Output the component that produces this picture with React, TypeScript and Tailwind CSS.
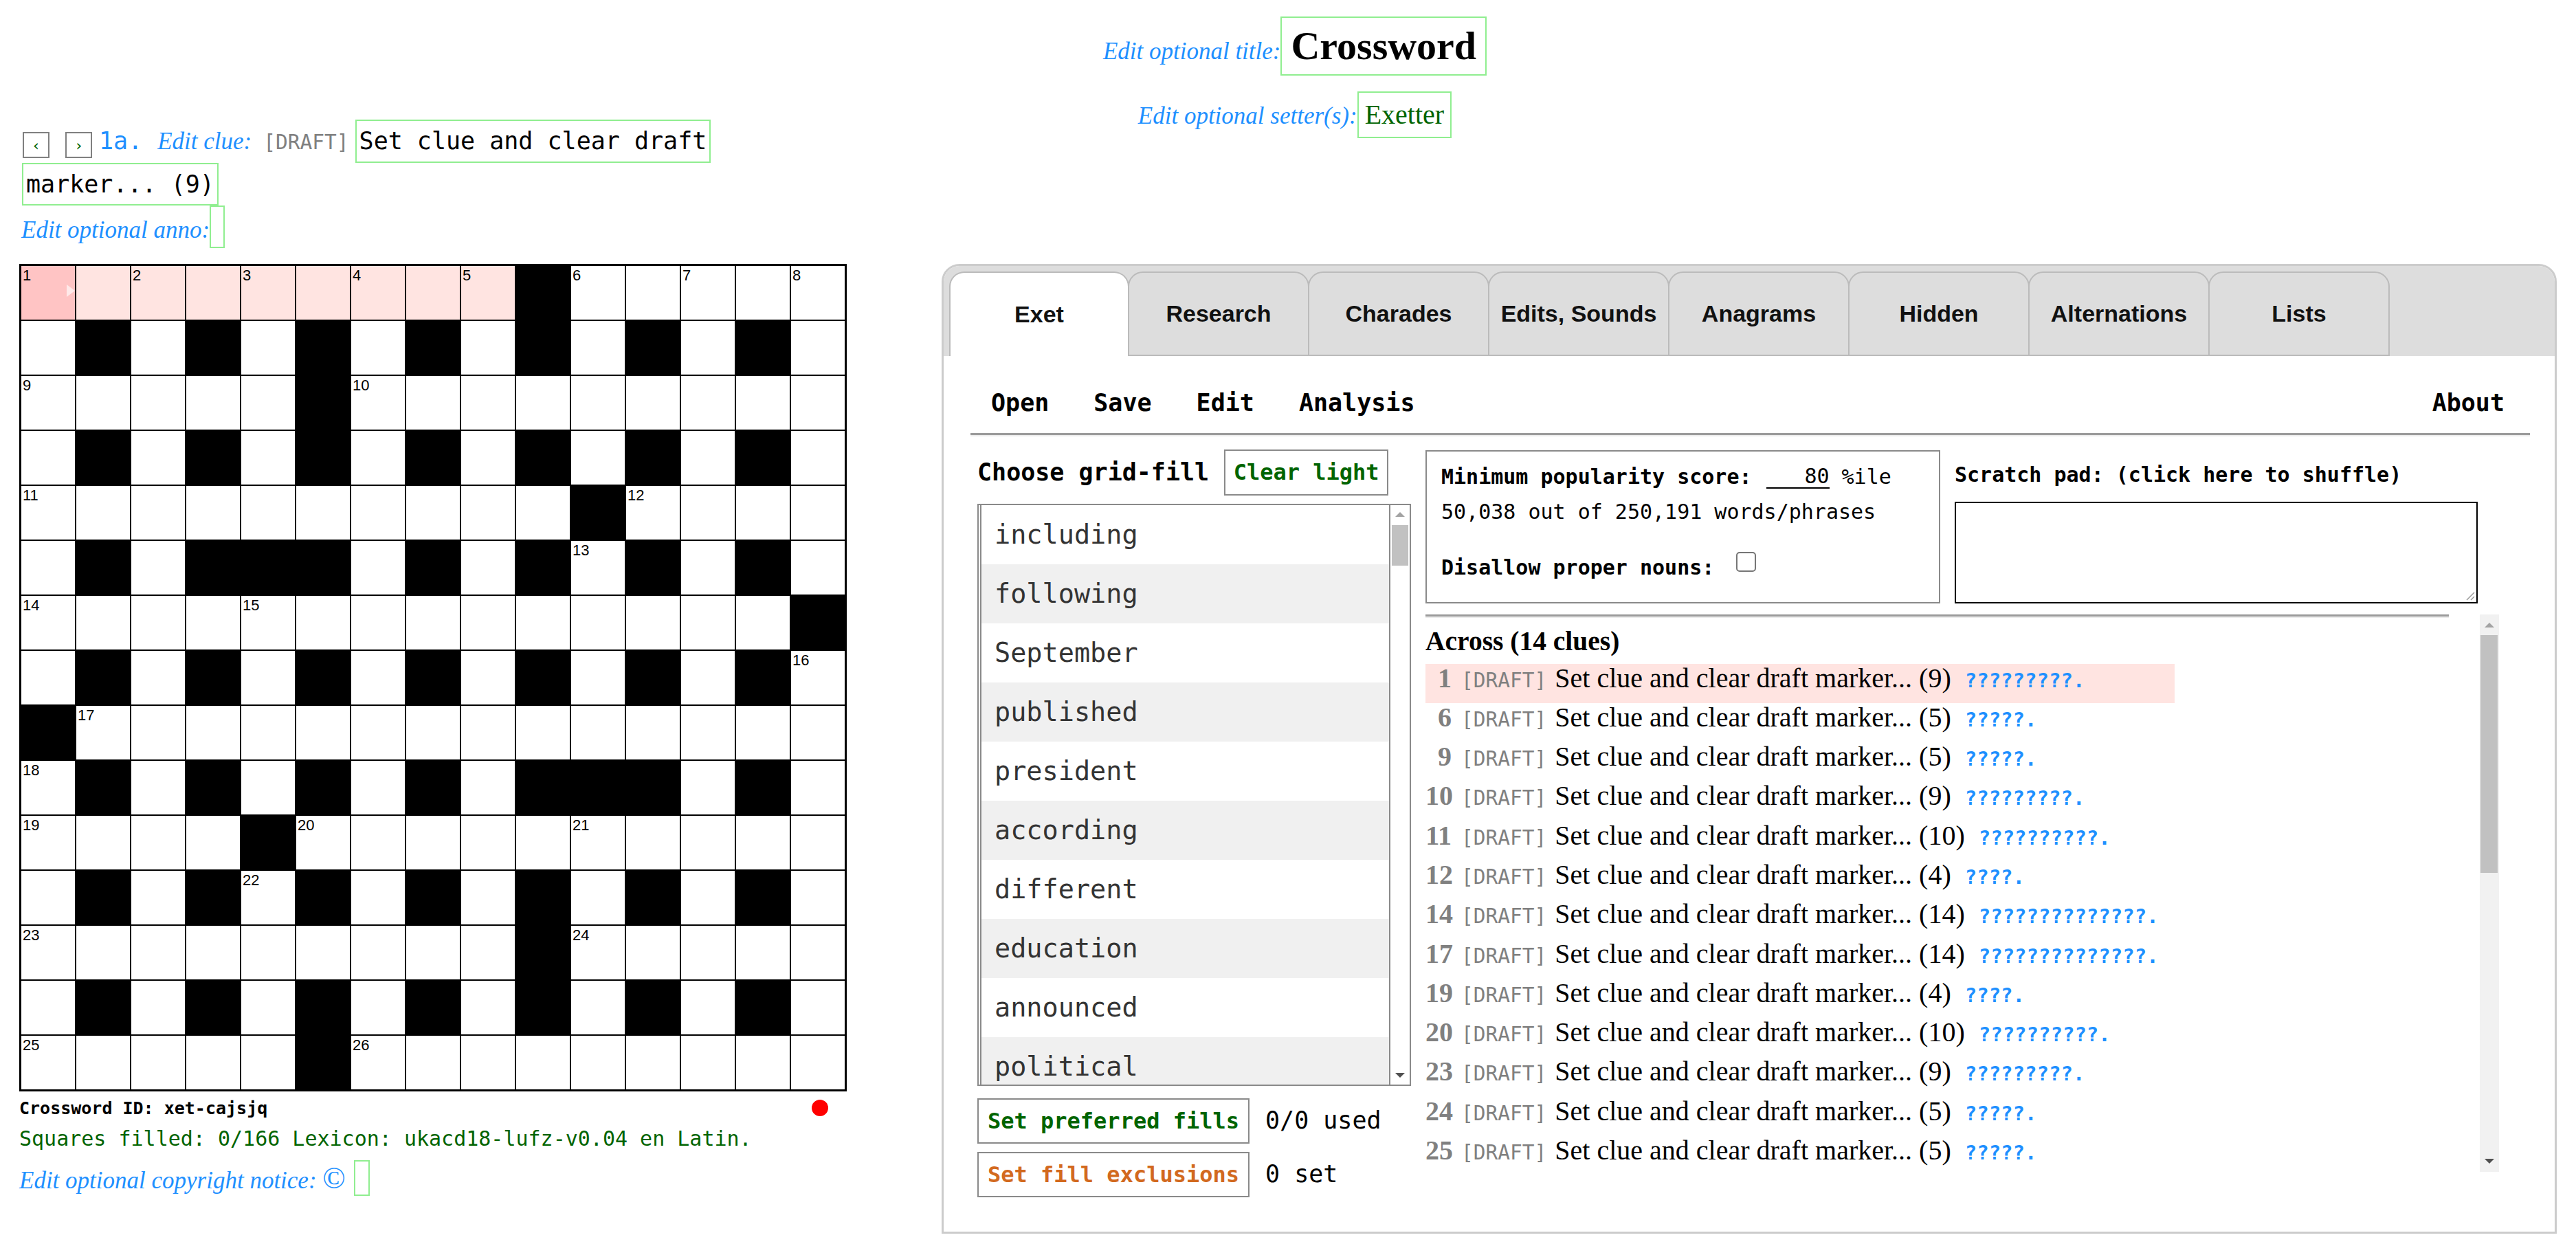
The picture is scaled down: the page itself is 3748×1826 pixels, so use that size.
import React from 'react';

const MONO = "font-['DejaVu_Sans_Mono',monospace]";
const SERIF = "font-['Liberation_Serif',serif]";
const SANS = "font-['Liberation_Sans',Arial,sans-serif]";

const GRID = [
  'WWWWWWWWWBWWWWW',
  'WBWBWBWBWBWBWBW',
  'WWWWWBWWWWWWWWW',
  'WBWBWBWBWBWBWBW',
  'WWWWWWWWWWBWWWW',
  'WBWBBBWBWBWBWBW',
  'WWWWWWWWWWWWWWB',
  'WBWBWBWBWBWBWBW',
  'BWWWWWWWWWWWWWW',
  'WBWBWBWBWBBBWBW',
  'WWWWBWWWWWWWWWW',
  'WBWBWBWBWBWBWBW',
  'WWWWWWWWWBWWWWW',
  'WBWBWBWBWBWBWBW',
  'WWWWWBWWWWWWWWW',
];

function computeNumbers(): number[][] {
  const n = GRID.length;
  const nums: number[][] = GRID.map((r) => r.split('').map(() => 0));
  let k = 1;
  const w = (r: number, c: number) => r >= 0 && c >= 0 && r < n && c < n && GRID[r][c] === 'W';
  for (let r = 0; r < n; r++) {
    for (let c = 0; c < n; c++) {
      if (!w(r, c)) continue;
      const across = !w(r, c - 1) && w(r, c + 1);
      const down = !w(r - 1, c) && w(r + 1, c);
      if (across || down) nums[r][c] = k++;
    }
  }
  return nums;
}

const NUMS = computeNumbers();

const ACROSS: [number, string][] = [
  [1, '9'], [6, '5'], [9, '5'], [10, '9'], [11, '10'], [12, '4'], [14, '14'],
  [17, '14'], [19, '4'], [20, '10'], [23, '9'], [24, '5'], [25, '5'],
];

const WORDS = [
  'including', 'following', 'September', 'published', 'president',
  'according', 'different', 'education', 'announced', 'political',
];

const TABS = ['Exet', 'Research', 'Charades', 'Edits, Sounds', 'Anagrams', 'Hidden', 'Alternations', 'Lists'];

function UpArrow({ color }: { color: string }) {
  return (
    <svg width="14" height="8" viewBox="0 0 14 8">
      <polygon points="0,8 7,1 14,8" fill={color} />
    </svg>
  );
}
function DownArrow({ color }: { color: string }) {
  return (
    <svg width="14" height="8" viewBox="0 0 14 8">
      <polygon points="0,0 14,0 7,7" fill={color} />
    </svg>
  );
}

function Grid() {
  return (
    <div className="bg-black p-[3px] grid grid-cols-[repeat(15,78px)] gap-[2px] w-fit">
      {GRID.map((row, r) =>
        row.split('').map((ch, c) => {
          const black = ch === 'B';
          let bg = 'bg-white';
          if (black) bg = 'bg-black';
          else if (r === 0 && c === 0) bg = 'bg-[#ffc4c4]';
          else if (r === 0 && c < 9) bg = 'bg-[#ffe4e1]';
          const num = NUMS[r][c];
          return (
            <div key={`${r}-${c}`} className={`relative w-[78px] h-[78px] ${bg}`}>
              {num > 0 && (
                <span className={`block pl-[2px] pt-[3px] text-[22px] leading-none text-black ${SANS}`}>{num}</span>
              )}
              {r === 0 && c === 0 && (
                <svg className="absolute right-0 top-[27px]" width="14" height="18" viewBox="0 0 14 18">
                  <polygon points="2,0 14,9 2,18" fill="#ffe9e9" />
                </svg>
              )}
            </div>
          );
        })
      )}
    </div>
  );
}

function LeftColumn() {
  return (
    <div className="w-[1370px] shrink-0 pl-[28px]">
      <div className="flex items-baseline h-[63px]">
        <div className={`self-start mt-[18px] ml-[5px] w-[39px] h-[38px] border-2 border-[#808080] flex items-center justify-center text-[22px] text-[#006400] ${MONO}`}>‹</div>
        <div className={`self-start mt-[18px] ml-[23px] w-[39px] h-[38px] border-2 border-[#808080] flex items-center justify-center text-[22px] text-[#006400] ${MONO}`}>›</div>
        <span className={`ml-[10px] text-[35px] text-[#1e90ff] ${MONO}`}>1a.</span>
        <span className={`ml-[22px] italic text-[35px] text-[#1e90ff] ${SERIF}`}>Edit clue:</span>
        <span className={`ml-[17px] text-[29.5px] text-[#808080] ${MONO}`}>[DRAFT]</span>
        <span className={`ml-[9px] inline-block border-2 border-[#90ee90] px-[4px] leading-[59px] text-[35px] text-black ${MONO}`}>Set clue and clear draft</span>
      </div>
      <div className="flex">
        <span className={`ml-[4px] inline-block border-2 border-[#90ee90] px-[4px] leading-[58px] text-[35px] text-black ${MONO}`}>marker... (9)</span>
      </div>
      <div className="flex items-start">
        <span className={`ml-[3px] mt-[10px] italic text-[35px] text-[#1e90ff] ${SERIF}`}>Edit optional anno:</span>
        <span className="inline-block w-[22px] h-[62px] border-2 border-[#90ee90]" />
      </div>

      <div className="mt-[22px]">
        <Grid />
      </div>

      <div className="w-[1204px] flex items-center justify-between pr-[27px] mt-[6px]">
        <span className={`font-bold text-[25px] text-black ${MONO}`}>Crossword ID: xet-cajsjq</span>
        <span className="w-[24px] h-[24px] rounded-full bg-[#ff0000]" />
      </div>
      <div className={`mt-[3px] text-[30px] text-[#006400] ${MONO}`}>
        Squares filled: 0/166 Lexicon: ukacd18-lufz-v0.04 en Latin.
      </div>
      <div className="flex items-start mt-[9px]">
        <span className={`mt-[4px] italic text-[35px] text-[#1e90ff] ${SERIF}`}>
          Edit optional copyright notice: <span className="text-[44px] leading-none not-italic">©</span>
        </span>
        <span className="ml-[12px] inline-block w-[23px] h-[52px] border-2 border-[#90ee90]" />
      </div>
    </div>
  );
}

function WordList() {
  return (
    <div className="w-[631px] h-[847px] border-2 border-[#8a8a8a] flex bg-white">
      <div className="flex-1 ml-[2px] border-l-2 border-r-2 border-[#8a8a8a] overflow-hidden">
        {WORDS.map((w, i) => (
          <div
            key={w}
            className={`h-[86px] flex items-center pl-[19px] text-[38.5px] text-[#333333] ${MONO} ${i % 2 === 1 ? 'bg-[#f0f0f0]' : 'bg-white'}`}
          >
            {w}
          </div>
        ))}
      </div>
      <div className="w-[28px] flex flex-col items-center bg-white">
        <div className="h-[26px] flex items-center justify-center"><UpArrow color="#a3a3a3" /></div>
        <div className="w-[24px] h-[59px] mt-[3px] bg-[#c1c1c1]" />
        <div className="flex-1" />
        <div className="h-[26px] flex items-center justify-center"><DownArrow color="#505050" /></div>
      </div>
    </div>
  );
}

function ClueList() {
  return (
    <div className="flex h-[811px]">
      <div className="w-[1533px] overflow-hidden">
        <div className="w-[1497px]">
          <div className="h-[3px] bg-[#9b9b9b]" />
          <div className="h-[2px] bg-[#ececec]" />
        </div>
        <div className={`mt-[12px] font-bold text-[39.5px] leading-[45px] text-black ${SERIF}`}>Across (14 clues)</div>
        <div className="mt-[10px] w-[1090px]">
          {ACROSS.map(([n, len], i) => (
            <div key={n} className={`h-[57.3px] flex items-baseline leading-[40px] pt-[1px] ${i === 0 ? 'bg-[#ffe4e1]' : ''}`}>
              <span className={`w-[38px] text-right font-bold text-[40px] text-[#808080] ${SERIF}`}>{n}</span>
              <span className={`ml-[14px] text-[29.5px] text-[#808080] ${MONO}`}>[DRAFT]</span>
              <span className={`ml-[12px] text-[40px] text-black ${SERIF}`}>Set clue and clear draft marker... ({len})</span>
              <span className={`ml-[20px] font-bold text-[29px] text-[#1e90ff] ${MONO}`}>{'?'.repeat(parseInt(len, 10))}.</span>
            </div>
          ))}
        </div>
      </div>
      <div className="w-[29px] ml-[45px] bg-[#f1f1f1] flex flex-col items-center">
        <div className="h-[30px] flex items-center justify-center"><UpArrow color="#a3a3a3" /></div>
        <div className="w-[25px] h-[346px] bg-[#c1c1c1]" />
        <div className="flex-1" />
        <div className="h-[30px] flex items-center justify-center"><DownArrow color="#505050" /></div>
      </div>
    </div>
  );
}

function Panel() {
  return (
    <div className="w-[2350px] h-[1411px] border-[3px] border-[#cccccc] rounded-t-[26px] overflow-hidden flex flex-col bg-white">
      <div className="h-[131px] shrink-0 bg-[#dddddd] flex items-end pl-[8px]">
        {TABS.map((t, i) => (
          <div
            key={t}
            className={`h-[123px] flex items-center justify-center rounded-t-[22px] border-2 border-[#bbbbbb] font-bold text-[34px] text-[#111111] ${SANS} ${
              i === 0 ? 'w-[262px] bg-white border-b-0' : 'w-[264px] -ml-[2px] bg-[#dddddd]'
            }`}
          >
            {t}
          </div>
        ))}
      </div>
      <div className="flex-1 pl-[39px] pr-[36px]">
        <div className={`pt-[42px] pl-[30px] pr-[37px] flex items-baseline font-bold text-[35px] text-black ${MONO}`}>
          <span>Open</span>
          <span className="ml-[65px]">Save</span>
          <span className="ml-[65px]">Edit</span>
          <span className="ml-[65px]">Analysis</span>
          <span className="ml-auto">About</span>
        </div>
        <div className="mt-[17px]">
          <div className="h-[3px] bg-[#9b9b9b]" />
          <div className="h-[2px] bg-[#ececec]" />
        </div>
        <div className="mt-[19px] pl-[10px] flex">
          <div className="w-[631px] shrink-0">
            <div className="flex items-center h-[67px]">
              <span className={`font-bold text-[35px] text-black ${MONO}`}>Choose grid-fill</span>
              <div className={`ml-[22px] w-[239px] h-[67px] border-2 border-[#8a8a8a] flex items-center justify-center font-bold text-[32px] text-[#006400] ${MONO}`}>
                Clear light
              </div>
            </div>
            <div className="mt-[12px]">
              <WordList />
            </div>
            <div className="mt-[18px] flex items-center">
              <div className={`w-[396px] h-[66px] border-2 border-[#8a8a8a] flex items-center justify-center font-bold text-[32px] text-[#006400] ${MONO}`}>
                Set preferred fills
              </div>
              <span className={`ml-[23px] text-[35px] text-black ${MONO}`}>0/0 used</span>
            </div>
            <div className="mt-[12px] flex items-center">
              <div className={`w-[396px] h-[66px] border-2 border-[#8a8a8a] flex items-center justify-center font-bold text-[32px] text-[#d2691e] ${MONO}`}>
                Set fill exclusions
              </div>
              <span className={`ml-[23px] text-[35px] text-black ${MONO}`}>0 set</span>
            </div>
          </div>
          <div className="ml-[21px] w-[1562px] shrink-0">
            <div className="flex">
              <div className={`mt-[1px] w-[749px] h-[223px] border-2 border-[#8a8a8a] pl-[21px] text-[30px] text-black ${MONO}`}>
                <div className="mt-[18px] flex items-end leading-[35px]">
                  <span className="font-bold">Minimum popularity score:</span>
                  <span className="ml-[21px] inline-block w-[92px] h-[36px] border-b-2 border-black text-right leading-[35px]">80</span>
                  <span className="ml-[18px]">%ile</span>
                </div>
                <div className="mt-[16px] leading-[35px]">50,038 out of 250,191 words/phrases</div>
                <div className="mt-[41px] flex items-end leading-[35px]">
                  <span className="font-bold">Disallow proper nouns:</span>
                  <span className="ml-[32px] mb-[11px] inline-block w-[29px] h-[29px] rounded-[5px] border-2 border-[#767676] bg-white" />
                </div>
              </div>
              <div className="ml-[21px]">
                <div className={`mt-[19px] font-bold text-[30px] leading-[35px] text-black ${MONO}`}>Scratch pad: (click here to shuffle)</div>
                <div className="mt-[22px] relative w-[761px] h-[148px] border-2 border-black bg-white">
                  <svg className="absolute right-[2px] bottom-[2px]" width="16" height="16" viewBox="0 0 16 16">
                    <line x1="15" y1="4" x2="4" y2="15" stroke="#999" strokeWidth="1.5" />
                    <line x1="15" y1="10" x2="10" y2="15" stroke="#999" strokeWidth="1.5" />
                  </svg>
                </div>
              </div>
            </div>
            <div className="mt-[16px]">
              <ClueList />
            </div>
          </div>
        </div>
      </div>
    </div>
  );
}

export default function App() {
  return (
    <div className={`w-[3748px] h-[1826px] bg-white overflow-hidden ${SERIF}`}>
      <div className="pt-[24px] pl-[20px] text-center">
        <div className="flex justify-center items-baseline">
          <span className="italic text-[35px] text-[#1e90ff]">Edit optional title:</span>
          <span className="inline-block border-2 border-[#90ee90] px-[13px] py-[6px] leading-[70px] text-[58px] font-bold text-black">Crossword</span>
        </div>
        <div className="mt-[23px] flex justify-center items-baseline">
          <span className="italic text-[35px] text-[#1e90ff]">Edit optional setter(s):</span>
          <span className="inline-block border-2 border-[#90ee90] px-[9px] py-[9px] leading-[46px] text-[40px] text-[#006400]">Exetter</span>
        </div>
      </div>
      <div className="-mt-[27px] flex items-start">
        <LeftColumn />
        <div className="pt-[210px]">
          <Panel />
        </div>
      </div>
    </div>
  );
}
